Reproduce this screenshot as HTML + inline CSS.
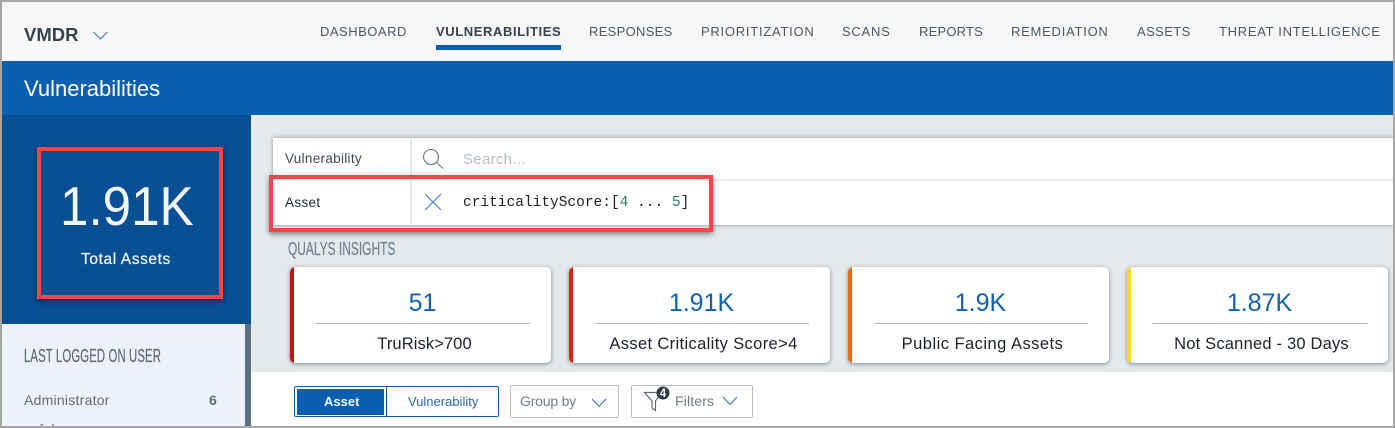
<!DOCTYPE html>
<html><head><meta charset="utf-8"><style>
html,body{margin:0;padding:0;background:#fff}
#p{position:relative;width:1395px;height:428px;overflow:hidden;background:#fff;font-family:"Liberation Sans",sans-serif}
#p div,#p span.t{position:absolute}
.t{white-space:nowrap;line-height:1}
.n{font-size:13px;color:#4a5866;letter-spacing:.75px;top:24.500px}
.card{top:267px;width:261px;height:96px;background:#fff;border-radius:5px;overflow:hidden;box-shadow:0 1px 4px rgba(40,55,70,.55)}
.bar{left:0;top:0;bottom:0;width:4px}
.ln{left:26px;width:214px;top:56px;height:1px;background:#aeb7c1}
.v{left:2px;width:261px;text-align:center;top:24px;font-size:25px;color:#0f62b4;line-height:1;white-space:nowrap}
.l{left:4px;width:261px;text-align:center;top:69px;font-size:16.500px;color:#1a2230;line-height:1;white-space:nowrap}
</style></head><body><div id="p">
<div style="left:0;top:2px;width:1395px;height:59px;background:#f7f7f7"></div>
<div style="left:0;top:61px;width:1395px;height:54px;background:#0b5fb3"></div>
<div style="left:251px;top:115px;width:1144px;height:257px;background:#e4e9ec"></div>
<div style="left:2px;top:115px;width:249px;height:209px;background:#084f94"></div>
<div style="left:2px;top:324px;width:243px;height:104px;background:#edf2fa"></div>
<div style="left:245px;top:324px;width:6px;height:104px;background:#5a6f82"></div>

<span class="t" style="left:24px;top:26px;font-size:18.500px;font-weight:bold;color:#36424e">VMDR</span>
<svg style="position:absolute;left:93px;top:31px" width="15" height="9"><path d="M.5 1 7.5 8 14.500 1" fill="none" stroke="#2f78c4" stroke-width="1.100"/></svg>

<span class="t n" style="left:320px;letter-spacing:.5px">DASHBOARD</span>
<span class="t n" style="left:436px;font-weight:bold;color:#36424e;letter-spacing:.6px">VULNERABILITIES</span>
<div style="left:436px;top:45px;width:125px;height:5px;background:#0b5fb3"></div>
<span class="t n" style="left:589px;letter-spacing:.3px">RESPONSES</span>
<span class="t n" style="left:701px">PRIORITIZATION</span>
<span class="t n" style="left:842px">SCANS</span>
<span class="t n" style="left:919px;letter-spacing:.2px">REPORTS</span>
<span class="t n" style="left:1011px">REMEDIATION</span>
<span class="t n" style="left:1137px;letter-spacing:.4px">ASSETS</span>
<span class="t n" style="left:1219px;letter-spacing:.7px">THREAT INTELLIGENCE</span>

<span class="t" style="left:24px;top:78px;font-size:22px;color:#fff">Vulnerabilities</span>

<div style="left:37px;top:147px;width:178px;height:144px;border:4px solid #f8444a;box-shadow:0 2px 5px rgba(0,0,0,.5)"></div>
<span class="t" style="left:60px;top:179px;font-size:55px;color:#f1f5f9;transform:scaleX(.93);transform-origin:0 0">1.91K</span>
<span class="t" style="left:81px;top:252px;font-size:15.500px;color:#f3f6fa;letter-spacing:.6px;-webkit-text-stroke:.2px #f3f6fa">Total Assets</span>

<span class="t" style="left:24px;top:347px;font-size:18px;color:#5a6a7a;transform:scaleX(.63);transform-origin:0 0;letter-spacing:.2px;-webkit-text-stroke:.2px #5a6a7a">LAST LOGGED ON USER</span>
<span class="t" style="left:24px;top:393px;font-size:14px;color:#5f6c79;letter-spacing:.25px">Administrator</span>
<span class="t" style="left:209px;top:393px;font-size:14px;font-weight:bold;color:#5f6c79">6</span>
<span class="t" style="left:24px;top:422px;font-size:14px;color:#5f6c79;letter-spacing:.25px">gsfuhrer</span>
<div style="left:0;top:426px;width:1395px;height:2px;background:#a6a6a6"></div>

<div style="left:273px;top:138px;width:1122px;height:87px;background:#fff;box-shadow:0 -1px 4px rgba(60,75,90,.35),0 1px 3px rgba(60,75,90,.25)"></div>
<div style="left:273px;top:179px;width:1122px;height:2px;background:#e4e9ec"></div>
<div style="left:410px;top:138px;width:2px;height:87px;background:#e4e9ec"></div>
<span class="t" style="left:285px;top:152px;font-size:13.500px;color:#3f4a56;letter-spacing:.3px">Vulnerability</span>
<svg style="position:absolute;left:422px;top:148px" width="22" height="21"><circle cx="9" cy="9" r="7.500" fill="none" stroke="#6a7885" stroke-width="1.100"/><path d="M14.500 14.500 21 20.500" stroke="#6a7885" stroke-width="1.100"/></svg>
<span class="t" style="left:463px;top:152px;font-size:15px;color:#b3bec8;letter-spacing:.3px">Search...</span>
<span class="t" style="left:285px;top:196px;font-size:13.500px;color:#1f2a35;letter-spacing:.35px">Asset</span>
<svg style="position:absolute;left:424px;top:193px" width="18" height="18"><path d="M1 1 17 17M17 1 1 17" stroke="#3f83c4" stroke-width="1.200" fill="none"/></svg>
<span class="t" style="left:463px;top:196px;font-family:'Liberation Mono',monospace;font-size:14.500px;color:#1a1f26">criticalityScore:[<span style="color:#2c7a6b">4</span> ... <span style="color:#2c7a6b">5</span>]</span>
<div style="left:269px;top:175px;width:436px;height:49px;border:4px solid #f8444a;box-shadow:0 2px 5px rgba(0,0,0,.45)"></div>

<span class="t" style="left:288px;top:240px;font-size:18px;color:#6f8294;transform:scaleX(.664);transform-origin:0 0;-webkit-text-stroke:.2px #6f8294">QUALYS INSIGHTS</span>

<div class="card" style="left:290px"><div class="bar" style="background:#b81a0f"></div><div class="v">51</div><div class="ln"></div><div class="l" style="letter-spacing:.1px">TruRisk&gt;700</div></div>
<div class="card" style="left:569px"><div class="bar" style="background:#e81f00"></div><div class="v">1.91K</div><div class="ln"></div><div class="l" style="letter-spacing:.36px">Asset Criticality Score&gt;4</div></div>
<div class="card" style="left:848px"><div class="bar" style="background:#e86c1a"></div><div class="v">1.9K</div><div class="ln"></div><div class="l" style="letter-spacing:.47px">Public Facing Assets</div></div>
<div class="card" style="left:1127px"><div class="bar" style="background:#fdd92a"></div><div class="v">1.87K</div><div class="ln"></div><div class="l" style="letter-spacing:.2px">Not Scanned - 30 Days</div></div>

<div style="left:294px;top:386px;width:203px;height:29px;border:1px solid #0b5fb3;border-radius:2px"></div>
<div style="left:386px;top:386px;width:1px;height:31px;background:#0b5fb3"></div>
<div style="left:297px;top:389px;width:87px;height:26px;background:#0b5fb3"></div>
<span class="t" style="left:324px;top:395px;font-size:13px;font-weight:bold;color:#f1f6fb">Asset</span>
<span class="t" style="left:408px;top:395px;font-size:13px;color:#2a69ae">Vulnerability</span>

<div style="left:510px;top:385px;width:107px;height:31px;border:1px solid #b4c1cc;border-radius:2px"></div>
<span class="t" style="left:520px;top:394px;font-size:14px;color:#6e7d8b;letter-spacing:-.2px">Group by</span>
<svg style="position:absolute;left:591px;top:398px" width="16" height="10"><path d="M1 1 8 8.500 15 1" fill="none" stroke="#2f78c4" stroke-width="1.100"/></svg>

<div style="left:631px;top:385px;width:120px;height:31px;border:1px solid #b4c1cc;border-radius:2px"></div>
<svg style="position:absolute;left:643px;top:386px" width="30" height="28"><path d="M1.500 6.500H18L12.500 15V24.500L9 22V15Z" fill="none" stroke="#5d6b78" stroke-width="1.200"/><circle cx="20" cy="7" r="6.500" fill="#2e3a45"/><text x="20" y="11" text-anchor="middle" font-family="Liberation Sans" font-size="11.500" font-weight="bold" fill="#fff">4</text></svg>
<span class="t" style="left:675px;top:394px;font-size:14px;color:#6e7d8b;letter-spacing:.15px">Filters</span>
<svg style="position:absolute;left:722px;top:396px" width="16" height="10"><path d="M1 1 8 8.500 15 1" fill="none" stroke="#2f78c4" stroke-width="1.100"/></svg>

<div style="left:0;top:0;width:1395px;height:2px;background:#a6a6a6"></div>
<div style="left:0;top:0;width:2px;height:428px;background:#a6a6a6"></div>
<div style="left:1393px;top:0;width:2px;height:428px;background:#a6a6a6"></div>
</div></body></html>
